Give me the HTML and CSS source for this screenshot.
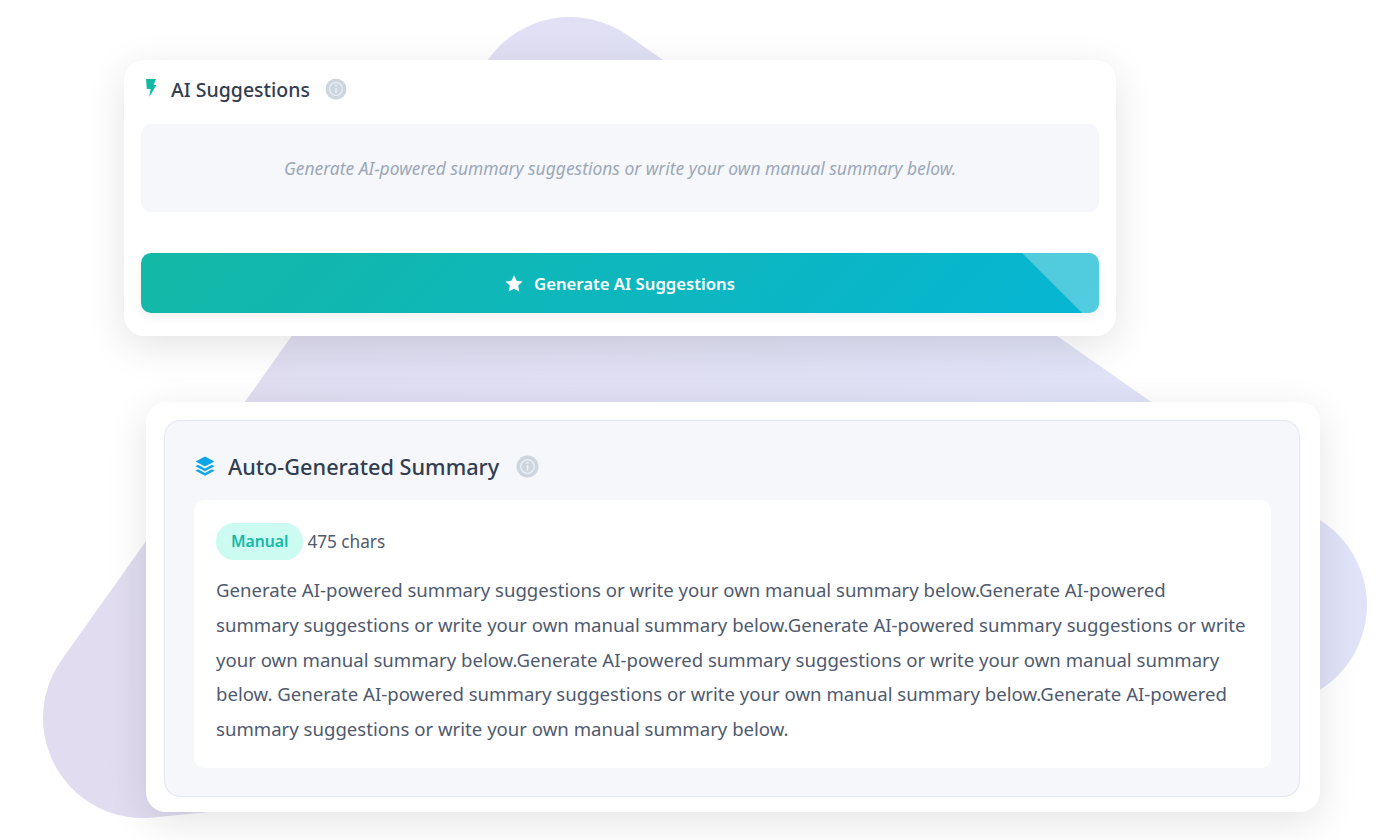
FILE: index.html
```html
<!DOCTYPE html>
<html lang="en">
<head>
  <meta charset="UTF-8">
  <title>AI Suggestions</title>
  <link rel="stylesheet" href="styles.css">
</head>
<body>
  <!-- rounded triangle behind the cards -->
  <svg class="blob" width="1400" height="840" viewBox="0 0 1400 840" aria-hidden="true">
    <defs>
      <linearGradient id="blobFill" gradientUnits="userSpaceOnUse" x1="43" y1="700" x2="1367" y2="300">
        <stop offset="0" stop-color="#e1dcf0"/>
        <stop offset="1" stop-color="#e0e4f9"/>
      </linearGradient>
    </defs>
    <polygon points="570,117 143,718 1267,605" fill="url(#blobFill)" stroke="url(#blobFill)" stroke-width="200" stroke-linejoin="round"/>
  </svg>

  <section class="card card-suggestions">
    <div class="card-title">
      <svg class="icon-bolt" width="12" height="18" viewBox="0 0 12 18"><path d="M1 0H11L8.600 6H11.500L4.200 18L5.600 10L1.800 10Z" fill="#14b8a6"/></svg>
      <h2>AI Suggestions</h2>
      <svg class="icon-info" width="22" height="22" viewBox="0 0 22 22"><circle cx="11" cy="11" r="10.500" fill="#cdd6df"/><circle cx="11" cy="11" r="6.500" fill="none" stroke="#edf0f3" stroke-width="1.200"/><rect x="10.200" y="9.800" width="1.600" height="5" fill="#edf0f3"/><rect x="10.200" y="6.800" width="1.600" height="1.700" fill="#edf0f3"/></svg>
    </div>
    <div class="placeholder">Generate AI-powered summary suggestions or write your own manual summary below.</div>
    <button class="generate-btn">
      <svg width="18" height="17" viewBox="0 0 18 17"><path d="M9 0.300L11.600 5.700L17.600 6.500L13.200 10.600L14.300 16.500L9 13.700L3.700 16.500L4.800 10.600L0.400 6.500L6.400 5.700Z" fill="#fff"/></svg>
      <span>Generate AI Suggestions</span>
    </button>
  </section>

  <section class="card card-summary">
    <div class="summary-panel">
      <div class="card-title summary-title">
        <svg class="icon-layers" width="20" height="20" viewBox="0 0 20 20"><path d="M10 0.500L19.500 5.500L10 10.500L0.500 5.500Z" fill="#0ea5e9"/><path d="M3 8.800L10 12.500L17 8.800L19.500 10.200L10 15.200L0.500 10.200Z" fill="#0ea5e9"/><path d="M3 13.300L10 17L17 13.300L19.500 14.700L10 19.700L0.500 14.700Z" fill="#0ea5e9"/></svg>
        <h2>Auto-Generated Summary</h2>
        <svg class="icon-info" width="23" height="23" viewBox="0 0 22 22"><circle cx="11" cy="11" r="10.500" fill="#cdd6df"/><circle cx="11" cy="11" r="6.500" fill="none" stroke="#edf0f3" stroke-width="1.200"/><rect x="10.200" y="9.800" width="1.600" height="5" fill="#edf0f3"/><rect x="10.200" y="6.800" width="1.600" height="1.700" fill="#edf0f3"/></svg>
      </div>
      <div class="summary-body">
        <div class="summary-meta">
          <span class="badge">Manual</span>
          <span class="chars">475 chars</span>
        </div>
        <p>Generate AI-powered summary suggestions or write your own manual summary below.Generate AI-powered summary suggestions or write your own manual summary below.Generate AI-powered summary suggestions or write your own manual summary below.Generate AI-powered summary suggestions or write your own manual summary below. Generate AI-powered summary suggestions or write your own manual summary below.Generate AI-powered summary suggestions or write your own manual summary below.</p>
      </div>
    </div>
  </section>
</body>
</html>
```

FILE: styles.css
```css
* {
  box-sizing: border-box;
}
html, body {
  margin: 0;
  height: 840px;
  overflow: hidden;
}
body {
  position: relative;
  display: flex;
  flex-direction: column;
  align-items: flex-start;
  gap: 66px;
  padding-top: 60px;
  background: #fff;
  font-family: "Noto Sans", "Liberation Sans", sans-serif;
}
.blob {
  position: absolute;
  top: 0;
  left: 0;
}
.card {
  position: relative;
  background: #fff;
  border-radius: 20px;
  box-shadow: 0 10px 40px rgba(0, 0, 0, 0.11);
}
.card-suggestions {
  width: 992px;
  height: 276px;
  margin-left: 124px;
  padding: 17px;
}
.card-summary {
  width: 1174px;
  height: 410px;
  margin-left: 146px;
  padding: 18px 20px 15px 18px;
}
.card-title {
  display: flex;
  align-items: center;
  height: 24px;
  margin-bottom: 23px;
}
.card-title h2 {
  margin: 0;
  font-size: 19.500px;
  font-weight: 500;
  color: #323d50;
}
.icon-bolt {
  margin: 0 0 3px 4px;
}
.card-suggestions h2 {
  margin-left: 14px;
}
.card-suggestions .icon-info {
  margin: 0 0 0 15px;
}
.placeholder {
  display: flex;
  align-items: center;
  justify-content: center;
  height: 88px;
  margin-bottom: 41px;
  background: #f5f7fb;
  border-radius: 10px;
  font-size: 17.450px;
  font-style: italic;
  color: #9ca8b8;
}
.generate-btn {
  position: relative;
  display: flex;
  align-items: center;
  justify-content: center;
  gap: 11px;
  width: 100%;
  height: 60px;
  padding: 0;
  border: none;
  border-radius: 10px;
  overflow: hidden;
  background: linear-gradient(135deg, #14b8a6, #06b6d4);
  box-shadow: 0 4px 12px rgba(0, 0, 0, 0.06);
  font-family: inherit;
  font-size: 16.700px;
  font-weight: 600;
  color: #fff;
}
/* light corner on the button */
.generate-btn::after {
  content: "";
  position: absolute;
  top: 0;
  right: 0;
  width: 77px;
  height: 60px;
  background: rgba(255, 255, 255, 0.3);
  clip-path: polygon(0 0, 100% 0, 100% 100%, 60px 100%);
}
.summary-panel {
  height: 100%;
  padding: 29px 28px 28px 29px;
  background: #f5f7fb;
  border: 1px solid #e2e8f0;
  border-radius: 16px;
}
.summary-title {
  height: 32px;
  margin-bottom: 18px;
}
.summary-title h2 {
  margin-left: 13px;
  font-size: 21.700px;
}
.icon-layers {
  margin-left: 1px;
}
.summary-title .icon-info {
  margin: 0 0 0 17px;
}
.summary-body {
  height: 268px;
  padding: 23px 23px 0 22px;
  background: #fff;
  border-radius: 10px;
}
.summary-meta {
  display: flex;
  align-items: center;
  gap: 4px;
  margin-bottom: 13px;
}
.badge {
  padding: 8px 15px;
  background: #ccfbf1;
  border-radius: 18px;
  font-size: 15.700px;
  line-height: 21px;
  font-weight: 600;
  color: #14b8a6;
}
.chars {
  font-size: 17.200px;
  color: #4f5a6e;
}
.summary-body p {
  margin: 0;
  font-size: 18.600px;
  line-height: 34.800px;
  color: #4f5a6e;
}
```
